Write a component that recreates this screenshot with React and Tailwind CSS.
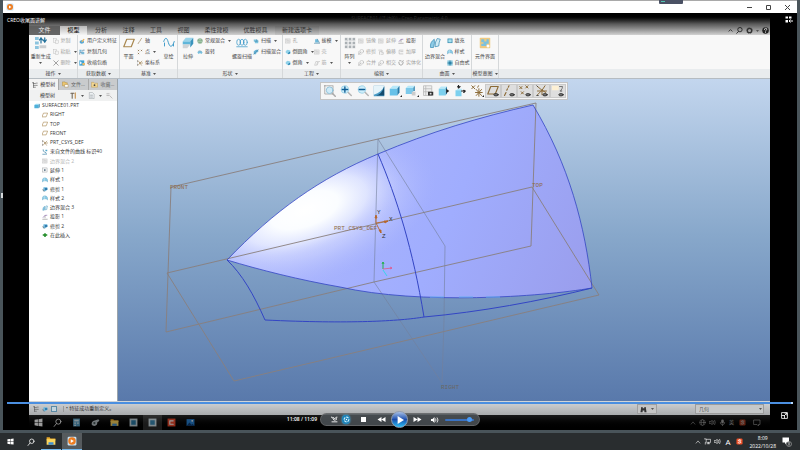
// src/App.jsx
import React, { useState } from 'react';

const line = { fill: 'none', strokeLinecap: 'round', strokeLinejoin: 'round' };

// all drawn on a 16x16 grid
const ICONS = {
  regen: (
    <g>
      <g fill="#8cc4de"><rect x="0" y="0" width="5" height="4" /><rect x="0" y="6" width="5" height="4" /><rect x="0" y="12" width="5" height="4" /></g>
      <rect x="6" y="11" width="9" height="4" fill="#c9cdd0" />
      <path d="M8 8V2M6 4l2-3 2 3M13 1v6M11 4l2 3 2-3" stroke="#23719b" strokeWidth="1.6" {...line} />
    </g>
  ),
  copy: <g fill="#f4f4f4" stroke="#b3b3b3"><rect x="1.5" y="1.5" width="8" height="10" /><rect x="6.5" y="5.5" width="8" height="9" /></g>,
  cross: <path d="M2 2l12 12M14 2L2 14" stroke="#777" strokeWidth="1.8" {...line} />,
  udf: (
    <g>
      <path d="M2 8l6-3 5 3v5l-6 2-5-2z" fill="#57a7d4" />
      <path d="M6 9l6-7 3 2-6 7z" fill="#e9b765" />
    </g>
  ),
  copygeom: (
    <g>
      <path d="M1 2h6v5H1zM6 8h8v6H6z" fill="#79b8d8" />
      <path d="M2 14V9h4M10 6V3h4" stroke="#3a6f90" strokeWidth="1.6" {...line} />
    </g>
  ),
  shrink: (
    <g>
      <rect x="1" y="1" width="13" height="14" fill="#3fa3d6" />
      <path d="M3 3l5 5-5 4z" fill="#fff" />
      <path d="M9 8h7v6H9z" fill="#e7bb69" />
    </g>
  ),
  plane: <path d="M5 3h10l-4 10H1z" stroke="#a8874f" strokeWidth="1.6" {...line} />,
  axis: <path d="M3 15l3-5M8 8l1-2M10 4l2-3" stroke="#8d7142" strokeWidth="1.6" {...line} />,
  point: <path d="M3 3l2 2M5 3L3 5M11 3l2 2M13 3l-2 2M3 11l2 2M5 11l-2 2" stroke="#7c6239" strokeWidth="1.6" {...line} />,
  csys: (
    <g stroke="#92713b" strokeWidth="1.4" {...line}>
      <path d="M3 2l5 6-5 6M8 8h7M8 8l5-5M8 8l4 6" />
      <path d="M1 2v3M1 11v3" stroke="#444" />
    </g>
  ),
  sketch: <path d="M1 6c2-6 4-6 6 1s5 8 8-1M2 12V8M14 12V9" stroke="#3e9ac8" strokeWidth="1.3" {...line} />,
  extrude: (
    <g>
      <path d="M1 6l4-5h10l-4 5z" fill="#9ad4ea" /><path d="M11 6l4-5v8l-4 5z" fill="#3a94bd" />
      <path d="M1 6h10v4H1z" fill="#5fb6da" /><path d="M1 10h10L7 15H1z" fill="#cfd3d6" />
    </g>
  ),
  blend: (
    <g>
      <circle cx="8" cy="8" r="6.5" fill="#a9ccb0" stroke="#55875e" />
      <path d="M2 6q6 4 12 0M5 13q3-5 6 0" stroke="#55875e" {...line} />
    </g>
  ),
  revolve: (
    <g>
      <path d="M1 9q7-7 14 0l-3 4q-4-3-8 0z" fill="#77bfdd" /><path d="M3 6q5-4 9 0" stroke="#39799c" {...line} />
    </g>
  ),
  helix: (
    <g stroke="#3e9ac8" {...line}>
      <ellipse cx="3.5" cy="7" rx="2.5" ry="4" /><ellipse cx="8" cy="7" rx="2.5" ry="4" /><ellipse cx="12.5" cy="7" rx="2.5" ry="4" />
      <path d="M1 13h14" />
    </g>
  ),
  sweep: (
    <g>
      <path d="M2 4h8l4 4v6H5V9H2z" fill="#7cc3de" /><path d="M10 4v4h4M5 9h5" stroke="#277299" {...line} />
    </g>
  ),
  sweepblend: (
    <g>
      <path d="M2 14V6l6-4h6v6q-6 0-6 6z" fill="#68b4d7" /><path d="M2 14l6-7 6-5" stroke="#275f82" {...line} />
    </g>
  ),
  round: (
    <g>
      <path d="M2 5l5-3 7 2v7l-6 3-6-4z" fill="#8fd0e8" /><path d="M8 14q0-7 6-7v5z" fill="#2b86b3" />
    </g>
  ),
  draft: (
    <g>
      <path d="M3 3h6l4 9H3z" fill="#6fb9da" /><path d="M1 14h14M9 3l5 9" stroke="#2b7197" strokeWidth="1.4" {...line} />
    </g>
  ),
  greybox: <g stroke="#b2b2b2" fill="#eee"><rect x="1.5" y="2.5" width="12" height="11" /><path d="M5 6h6v5H5zM5 2.5v3" /></g>,
  greyrib: <path d="M2 13L5 4h5L7 13zM9 13l3-9h3" stroke="#b2b2b2" strokeWidth="1.3" {...line} />,
  greyswap: <path d="M2 3h9v4H4v7M8 14h6V9l-4 0" stroke="#adadad" strokeWidth="1.4" {...line} />,
  greycircle: <g stroke="#adadad" strokeWidth="1.3" {...line}><circle cx="10" cy="6" r="5" /><path d="M1 14L8 8M2 7v7h6" /></g>,
  pattern: (
    <g fill="#aab0b4">
      {[1, 6, 11].map((y) => [1, 6, 11].map((x) => <rect key={`${x}-${y}`} x={x} y={y} width="4" height="4" stroke="#f8f8f8" strokeWidth="0.5" />))}
    </g>
  ),
  project: (
    <g>
      <path d="M3 9q4-8 10-6" stroke="#8058a8" strokeWidth="1.6" {...line} />
      <path d="M2 14h12M8 5v5" stroke="#777" strokeWidth="1.4" {...line} />
    </g>
  ),
  thicken: <path d="M13 3H3v10h10M7 7h6" stroke="#adadad" strokeWidth="1.5" {...line} />,
  solidify: <path d="M2 6q0 8 6 8 6-1 6-8M10 5l4-3M4 2h4" stroke="#777" strokeWidth="1.6" {...line} />,
  boundary: (
    <g>
      <path d="M2 14Q1 7 7 3q1 5-1 11z" fill="#8dcbe6" stroke="#3f8fb7" /><path d="M8 13q0-7 3-11l4 1q-2 5-2 9z" fill="#d0ebf5" stroke="#3f8fb7" />
    </g>
  ),
  fill: <rect x="2.5" y="2.5" width="11" height="10" fill="#a9e0ee" stroke="#358cb0" strokeWidth="2" />,
  style: (
    <g>
      <path d="M1 13V7q1-5 7-5 6 1 7 6v5q-3-3-7-3t-7 3z" fill="#8bcde8" stroke="#559cbd" />
      <path d="M6 3v7" stroke="#fff" {...line} />
    </g>
  ),
  freestyle: (
    <g>
      <rect x="1" y="1" width="14" height="14" fill="#86c6dd" /><circle cx="8" cy="8" r="4" fill="#2b84a9" /><path d="M1 8h3M12 8h3M8 1v3M8 12v3" stroke="#245f7a" {...line} />
    </g>
  ),
  component: (
    <g>
      <rect x="1" y="1" width="14" height="14" rx="1" fill="#eec981" />
      <path d="M3 3h4v3h3V3h3v6h-3v3H3V9h3V7H3z" fill="#7cc1dd" />
      <circle cx="12" cy="12" r="2" fill="#fff" />
    </g>
  ),
  tree: <path d="M4 2v12M4 4h5M4 9h5M11 3h3M11 9h3M1 2h3M4 14h5" stroke="#555" strokeWidth="1.6" {...line} />,
  files: (
    <g>
      <path d="M1 2h6l1 2h4v7H1z" fill="#ecc770" stroke="#a88436" /><path d="M6 8h8v6H6z" fill="#fff" stroke="#a88436" />
    </g>
  ),
  fav: <g><path d="M1 3h5l2 2h7v9H1z" fill="#f2d691" stroke="#b3914b" /><circle cx="8" cy="9.500" r="2" fill="#444" /></g>,
  tools: (
    <g strokeWidth="2.4" {...line}>
      <path d="M2 3h7M5 4v10" stroke="#6d6252" /><path d="M12 2v12" stroke="#c58a3d" />
    </g>
  ),
  sheet: <g fill="#eef1f3" stroke="#888f94"><path d="M3 1h7l4 4v10H3z" /><path d="M5 7h6M5 9h6M5 12h6" /></g>,
  part: (
    <g>
      <path d="M1 5l4-3h10l-3 3z" fill="#a6e1f6" /><path d="M12 5l3-3v9l-3 3z" fill="#216f9c" /><path d="M1 5h11v9H1z" fill="#4eb0da" />
    </g>
  ),
  trim: (
    <g>
      <path d="M4 3h10l1 6-6 5H3z" fill="#6bb5da" /><path d="M8 6h6v4H8z" fill="#1f699c" /><path d="M2 9q-1 4 4 5" stroke="#666" strokeWidth="1.5" {...line} />
    </g>
  ),
  curve: <g><path d="M2 14h7M3 2q-1 5 4 6t5 6" stroke="#3a7fa3" strokeWidth="1.8" {...line} /><path d="M9 2h5v4H9z" fill="#53a8cc" /></g>,
  extrudeRow: <g><rect x="1.500" y="2.500" width="12" height="11" fill="#f5f5f5" stroke="#83898d" /><path d="M6 5l5 3-5 3z" fill="#38556b" /></g>,
  insert: <path d="M6 3h4v3h4v4h-4v3H6v-3H2V6h4z" fill="#1d8a24" />,
  blank: <g><rect x="1" y="1" width="11" height="14" fill="#eee" /><path d="M2 4h5M2 8h5M9 9l5 5" stroke="#aaa" strokeWidth="1.6" {...line} /></g>,
  zoomfit: (
    <g {...line}>
      <rect x="1" y="1" width="11" height="11" stroke="#999" strokeDasharray="2 1" /><circle cx="7.500" cy="7" r="4.500" fill="#cfeaf7" stroke="#7fb7d1" /><path d="M11 11l4 4" stroke="#aaa" strokeWidth="2" />
    </g>
  ),
  zoomin: <g {...line}><circle cx="6.500" cy="6" r="5" fill="#cfeefa" stroke="#8ecbe4" /><path d="M3 6h7M6.500 2.500v7" stroke="#0e5c94" strokeWidth="1.800" /><path d="M11 10l4 4" stroke="#b5b5b5" strokeWidth="2" /></g>,
  zoomout: <g {...line}><circle cx="6.500" cy="6" r="5" fill="#cfeefa" stroke="#8ecbe4" /><path d="M3 6h7" stroke="#0e5c94" strokeWidth="1.800" /><path d="M11 10l4 4" stroke="#b5b5b5" strokeWidth="2" /></g>,
  repaint: <g><rect x="1" y="1" width="14" height="14" fill="#4b9cc6" /><path d="M1 1h14Q12 10 1 13z" fill="#e6f4fa" /><path d="M15 2Q12 12 4 14h11z" fill="#134a6e" /></g>,
  cube: <g><path d="M1 5l4-4h9l-3 4z" fill="#b7e8f9" /><path d="M11 5l3-4v9l-3 4z" fill="#257ba9" /><path d="M1 5h10v9H1z" fill="#67c1e8" /></g>,
  cubeview: <g><path d="M1 4l3-3h9l-2 3z" fill="#b7e8f9" /><path d="M11 4l2-3v7h-2z" fill="#257ba9" /><path d="M1 4h10v8H1z" fill="#7cc9ea" /><rect x="9" y="9" width="5" height="5" fill="#ccc" /></g>,
  cubeout: <g><path d="M1 5l3-3h8l-2 3z" fill="#b7e8f9" /><path d="M10 5l2-3v9l-2 3z" fill="#257ba9" /><path d="M1 5h9v9H1z" fill="#7cd0ee" /><path d="M11 5l4 3-4 3z" fill="#222" /></g>,
  cubearrows: <g><path d="M3 7l2-2h6l-1 2z" fill="#b7e8f9" /><path d="M2 7h8v8H2z" fill="#7cd0ee" /><path d="M6 0v4M5 2l1 2 2-2M10 8h4M13 7l2 1-2 2" stroke="#222" strokeWidth="1.500" {...line} /></g>,
  saved: <g><path d="M2 1h11v13H2z" fill="#eee" stroke="#b7b7b7" /><path d="M5 1v13M2 5h11M2 9h11" stroke="#b7b7b7" /><path d="M8 9h7v5H8z" fill="#333" /><circle cx="11.500" cy="11.500" r="1.300" fill="#ddd" /></g>,
  datum: <g stroke="#8b6a35" strokeWidth="1.300" {...line}><path d="M1 1l4 4M5 1L1 5M7 6l7 8M14 6l-7 8M10.500 5v10M6 10h9M10 1l-1 2" /></g>,
  planeEye: <g {...line}><path d="M5 2h10l-4 10H1z" stroke="#8b6a35" strokeWidth="1.500" /><ellipse cx="12" cy="13" rx="3" ry="1.600" stroke="#222" fill="#777" /></g>,
  axisEye: <g {...line}><path d="M2 14l2-4M5 7l1-2M7 3l1-2" stroke="#8b6a35" strokeWidth="1.500" /><ellipse cx="12" cy="13" rx="3" ry="1.600" stroke="#222" fill="#777" /></g>,
  pointEye: <g {...line}><path d="M1 2l3 3M4 2L1 5M9 1l3 3M12 1L9 4M3 9l3 3M6 9l-3 3" stroke="#8b6a35" strokeWidth="1.300" /><ellipse cx="12" cy="13" rx="3" ry="1.600" stroke="#222" fill="#777" /></g>,
  csysEye: <g {...line}><path d="M2 2l6 5 4-6M8 7v6M8 7l-6 6M2 8h12M8 7l5 3" stroke="#8b6a35" strokeWidth="1.300" /><path d="M1 1l1 1M1 14h2" stroke="#222" /><ellipse cx="12" cy="13" rx="3" ry="1.600" stroke="#222" fill="#777" /></g>,
  noteEye: <g {...line}><path d="M0 1h9v6H0z" fill="#fdf0d4" /><path d="M10 2h4q0 3-2 5" stroke="#555" /><path d="M11 8h2" stroke="#222" /><ellipse cx="12" cy="13" rx="3" ry="1.600" stroke="#222" fill="#777" /></g>,
  win: <path d="M1 3l6-1v6H1zM8 2l7-1v7H8zM1 9h6v5l-6-1zM8 9h7v6l-7-1z" fill="#fff" />,
  search: <g stroke="#fff" strokeWidth="1.500" {...line}><circle cx="9.500" cy="6.500" r="4.500" /><path d="M6 10l-4 5" /></g>,
  folder: <g><path d="M1 2h5l1 2h8v3H1z" fill="#e8a82b" /><path d="M1 5h14v9H1z" fill="#fbd55d" /><path d="M4 10h8v4H4z" fill="#3f8fd2" /></g>,
  player: <g><rect x="1" y="1" width="14" height="14" rx="2" fill="#c9e3f5" /><circle cx="8" cy="8" r="6" fill="#ee7c1f" /><path d="M6 5l5 3-5 3z" fill="#fff" /></g>,
  calc: <g><rect x="2" y="1" width="12" height="14" fill="#5aa2c9" /><path d="M4 3h8v3H4z" fill="#d7e9f2" /><path d="M4 8h3v2H4zM9 8h3v2H9zM4 12h3v2H4z" fill="#d7e9f2" /></g>,
  paint: <g><path d="M1 11q0-6 7-7l5-2 2 3-4 3q1 5-5 6-4 0-5-3z" fill="#b7bfc4" /><circle cx="6" cy="9" r="2" fill="#455" /></g>,
  creo: <g><rect x="1" y="1" width="14" height="14" fill="#c4d3da" /><rect x="4" y="4" width="8" height="8" fill="#2a7ba7" /></g>,
  camtasia: <g><rect x="1" y="1" width="14" height="14" fill="#f04a2c" /><path d="M11 5H5v6h6" stroke="#fff" strokeWidth="2" {...line} /></g>,
  photo: <g><rect x="1" y="2" width="14" height="12" fill="#2580d3" /><path d="M1 14l5-6 4 4 2-2 3 4z" fill="#0d3c73" /><circle cx="11" cy="5" r="1.500" fill="#fff" /></g>,
  up: <path d="M3 11l5-6 5 6" stroke="#eee" strokeWidth="1.600" {...line} />,
  net: <path d="M5 3h10v7H7M10 10v3M7 13h6M1 2h4v8H3v4" stroke="#eee" strokeWidth="1.500" {...line} />,
  globe: <g stroke="#eee" strokeWidth="1.300" {...line}><circle cx="8" cy="8" r="6.500" /><ellipse cx="8" cy="8" rx="3" ry="6.500" /><path d="M2 8h12" /></g>,
  vol: <g stroke="#eee" strokeWidth="1.500" {...line}><path d="M1 6h3l3-3v10l-3-3H1z" /><path d="M10 5q2 3 0 6M13 3q3 5 0 10" /></g>,
  mic: <g><rect x="5" y="1" width="6" height="9" rx="3" fill="#eee" /><path d="M3 8q0 5 5 5t5-5M8 13v3" stroke="#eee" strokeWidth="1.500" {...line} /></g>,
  sogou: <g><rect x="1" y="1" width="14" height="14" rx="3" fill="#ee4f26" /><path d="M11 5Q5 2 5 6q6 1 6 4-1 3-6 1" stroke="#fff" strokeWidth="2" {...line} /></g>,
  note: <path d="M2 2h12v9h-3v3l-3-3H2z" stroke="#ddd" strokeWidth="1.400" {...line} />,
  gear: <g fill="none" stroke="#333"><circle cx="8" cy="8" r="5" strokeWidth="3" /><circle cx="8" cy="8" r="7" strokeDasharray="2 2" /></g>,
  help: <g><circle cx="8" cy="8" r="7.500" fill="#222" /><path d="M5.500 6q0-3 3-3t2.500 3L8 9M8 11.500v1" stroke="#fff" strokeWidth="1.600" {...line} /></g>,
  find: <path d="M3 2h3v3h4V2h3l2 12h-5v-4H6v4H1z" fill="#333" />,
};

function Icon({ name, className = 'size-[7px]' }) {
  return <svg viewBox="0 0 16 16" className={`block shrink-0 ${className}`} aria-hidden="true">{ICONS[name]}</svg>;
}

const Caret = ({ className = '' }) => (
  <svg viewBox="0 0 6 4" className={`w-[3px] h-[2px] shrink-0 ${className}`} aria-hidden="true"><path d="M0 0h6L3 4z" fill="#555" /></svg>
);

// items: { big } or { col: [icon, text, caret, disabled] }
const groups = [
  { title: '操作', width: 'w-[49px]', items: [
    { big: 'regen', text: '重新生成', width: 'w-[24px]', caret: true },
    { col: [['copy', '复制', false, true], ['copy', '粘贴', true, true], ['cross', '删除', true, true]], width: 'w-[25px]' },
  ] },
  { title: '获取数据', width: 'w-[42px]', items: [
    { col: [['udf', '用户定义特征'], ['copygeom', '复制几何'], ['shrink', '收缩包络']], width: 'w-[39px]' },
  ] },
  { title: '基准', width: 'w-[58px]', items: [
    { big: 'plane', text: '平面', width: 'w-[17px]' },
    { col: [['axis', '轴'], ['point', '点', true], ['csys', '坐标系']], width: 'w-[23px]' },
    { big: 'sketch', text: '草绘', width: 'w-[17px]' },
  ] },
  { title: '形状', width: 'w-[105px]', items: [
    { big: 'extrude', text: '拉伸', width: 'w-[18px]' },
    { col: [['blend', '常规混合', true], ['revolve', '旋转']], width: 'w-[34px]' },
    { big: 'helix', text: '螺旋扫描', width: 'w-[22px]' },
    { col: [['sweep', '扫描', true], ['sweepblend', '扫描混合']], width: 'w-[28px]' },
  ] },
  { title: '工程', width: 'w-[58px]', items: [
    { col: [['greybox', '孔', false, true], ['round', '倒圆角', true], ['round', '倒角', true]], width: 'w-[29px]' },
    { col: [['draft', '拔模', true], ['greybox', '壳', false, true], ['greyrib', '筋', true, true]], width: 'w-[25px]' },
  ] },
  { title: '编辑', width: 'w-[82px]', items: [
    { big: 'pattern', text: '阵列', width: 'w-[17px]', caret: true },
    { col: [['greybox', '镜像', false, true], ['greycircle', '修剪', false, true], ['greycircle', '合并', false, true]], width: 'w-[20px]' },
    { col: [['greybox', '延伸', false, true], ['greyswap', '偏移', false, true], ['greycircle', '相交', false, true]], width: 'w-[20px]' },
    { col: [['project', '投影'], ['thicken', '加厚', false, true], ['solidify', '实体化', false, true]], width: 'w-[24px]' },
  ] },
  { title: '曲面', width: 'w-[49px]', items: [
    { big: 'boundary', text: '边界混合', width: 'w-[23px]' },
    { col: [['fill', '填充'], ['style', '样式'], ['freestyle', '自由式']], width: 'w-[24px]' },
  ] },
  { title: '模型意图', width: 'w-[27px]', items: [{ big: 'component', text: '元件界面', width: 'w-[26px]' }] },
];

const tabs = [
  ['文件', 'w-[31px] bg-[#5c5c5c]/90 text-[#e8e8e8]'],
  ['模型', 'w-[27px] bg-linear-to-b from-[#b9b9b9] to-[#f5f5f5] text-black'],
  ['分析', 'w-[28px]'],
  ['注释', 'w-[27px]'],
  ['工具', 'w-[28px]'],
  ['视图', 'w-[27px]'],
  ['柔性建模', 'w-[39px]'],
  ['优胜模具', 'w-[39px]'],
  ['新建选项卡', 'w-[44px] bg-black/5'],
];

const treeRows = [
  ['plane', 'RIGHT'],
  ['plane', 'TOP'],
  ['plane', 'FRONT'],
  ['csys', 'PRT_CSYS_DEF'],
  ['curve', '来自文件的曲线 标识40'],
  ['greybox', '边界混合 2', true],
  ['extrudeRow', '延伸 1'],
  ['style', '样式 1'],
  ['trim', '修剪 1'],
  ['style', '样式 2'],
  ['boundary', '边界混合 3'],
  ['project', '投影 1'],
  ['trim', '修剪 2'],
  ['insert', '在此插入'],
];

const viewTools = [
  ['zoomfit', '重新调整'], ['zoomin', '放大'], ['zoomout', '缩小'], ['repaint', '重画'], ['cube', '显示样式', false, true],
  ['cubeview', '已保存方向', false, true], ['saved', '视图管理器'], ['cubeout', '透视图'], ['cubearrows', '分解'], ['datum', '基准显示', false, true],
  ['planeEye', '平面显示', true], ['axisEye', '轴显示', true], ['pointEye', '点显示', true], ['csysEye', '坐标系显示', true], ['noteEye', '注释显示', true],
];

function RibbonItem({ item }) {
  if (item.big) {
    return (
      <button className={`${item.width} h-[33px] flex flex-col items-center pt-[2px] whitespace-nowrap`}>
        <Icon name={item.big} className="size-[12px]" />
        <span className="mt-[4px] leading-[7px]">{item.text}</span>
        {item.caret && <Caret className="mt-[2px]" />}
      </button>
    );
  }
  return (
    <div className={`${item.width} flex flex-col`}>
      {item.col.map(([icon, text, caret, disabled]) => (
        <button key={text} disabled={disabled} className={`h-[11px] flex items-center gap-[2px] whitespace-nowrap ${disabled ? 'text-[#a3a3a3]' : ''}`}>
          <Icon name={icon} className="size-[6px]" />
          {text}
          {caret && <Caret className="ml-[1px]" />}
        </button>
      ))}
    </div>
  );
}

function Ribbon() {
  return (
    <div className="h-[44px] flex bg-[#f8f8f8] border-b border-[#b5bcc2] text-[5px] text-[#444]">
      {groups.map((g) => (
        <section key={g.title} className={`${g.width} shrink-0 flex flex-col border-r border-[#d5d8da]`}>
          <div className="h-[34px] flex justify-center overflow-hidden">
            {g.items.map((item, i) => <RibbonItem key={i} item={item} />)}
          </div>
          <button className="flex-1 flex items-center justify-center gap-[2px] bg-[#e9ecee] whitespace-nowrap">
            {g.title}<Caret />
          </button>
        </section>
      ))}
      <div className="flex-1 pt-[34px]"><div className="h-full bg-[#e9ecee]" /></div>
    </div>
  );
}

function AppHeader() {
  return (
    <header className="bg-linear-to-b from-black from-10% via-[#5a5a5a] via-50% to-[#d2d2d2] text-[#333]">
      <h1 className="h-[13px] pt-[2px] text-center text-[5px] leading-[7px] text-[#2c2c2c]">SURFACE01 (活动的) - Creo Parametric 4.0</h1>
      <nav className="h-[9px] flex text-[6px] leading-[9px]">
        {tabs.map(([name, cls]) => (
          <button key={name} className={`${cls} text-center whitespace-nowrap`}>{name}</button>
        ))}
        <div className="ml-auto flex items-center gap-[3px] pr-[1px]">
          <button aria-label="折叠"><svg viewBox="0 0 16 16" className="size-[5px]"><path d="M2 11l6-6 6 6" stroke="#222" strokeWidth="2.5" fill="none" /></svg></button>
          <button aria-label="搜索"><svg viewBox="0 0 16 16" className="size-[7px]"><circle cx="9" cy="6" r="5" stroke="#222" strokeWidth="2" fill="none" /><path d="M6 10l-5 5" stroke="#222" strokeWidth="2" /></svg></button>
          <button aria-label="设置"><Icon name="gear" /></button>
          <Caret />
          <button aria-label="帮助"><Icon name="help" /></button>
        </div>
      </nav>
    </header>
  );
}

function ModelTree() {
  return (
    <aside className="w-[89px] shrink-0 flex flex-col bg-white border-r border-[#9aa3aa] text-[5px] text-[#333]">
      <div className="h-[11px] grid grid-cols-3 bg-[#c9cbcd]">
        <button className="flex items-center justify-center gap-[2px] bg-[#f3f3f3]"><Icon name="tree" className="size-[6px]" />模型树</button>
        <button className="flex items-center justify-center gap-[2px] border-l border-[#a9a9a9] text-[#666]"><Icon name="files" />文件…</button>
        <button className="flex items-center justify-center gap-[2px] border-l border-[#a9a9a9] text-[#666]"><Icon name="fav" />收藏…</button>
      </div>
      <div className="h-[11px] flex items-center bg-[#f0f1f1] pl-[11px] pr-[4px]">
        <h2>模型树</h2>
        <div className="ml-auto flex items-center gap-[4px]">
          <button aria-label="设置"><Icon name="tools" /></button>
          <Caret />
          <button aria-label="显示"><Icon name="sheet" /></button>
          <Caret />
          <button aria-label="过滤"><Icon name="blank" /></button>
        </div>
      </div>
      <ul className="h-[139px] flex flex-col justify-between whitespace-nowrap leading-[9px]">
        <li className="flex items-center gap-[2px] pl-[5px]"><Icon name="part" className="size-[6px]" />SURFACE01.PRT</li>
        {treeRows.map(([icon, text, dim]) => (
          <li key={text} className={`flex items-center gap-[2px] pl-[13px] ${dim ? 'text-[#b5b5b5]' : ''}`}>
            <Icon name={icon} className="size-[6px]" />{text}
          </li>
        ))}
      </ul>
    </aside>
  );
}

const SURFACE = 'M227 260C274 211 320 178 378 154C430 132 480 117 533 105C569 165 585 225 592 288C540 297 420 305 340 287C300 280 260 270 227 260Z';

function Model() {
  return (
    <svg viewBox="118 79 652 322" preserveAspectRatio="xMidYMid slice" className="absolute inset-0 size-full" fill="none">
      <defs>
        <linearGradient id="base" x1="300" y1="180" x2="580" y2="300" gradientUnits="userSpaceOnUse">
          <stop offset="0" stopColor="#abb6fd" />
          <stop offset="0.5" stopColor="#a0adfe" />
          <stop offset="1" stopColor="#9a9eed" />
        </linearGradient>
        <radialGradient id="shine">
          <stop offset="0" stopColor="#fff" />
          <stop offset="0.35" stopColor="#fdffff" stopOpacity="0.95" />
          <stop offset="0.65" stopColor="#f0f4ff" stopOpacity="0.6" />
          <stop offset="1" stopColor="#c0c8ff" stopOpacity="0" />
        </radialGradient>
        <radialGradient id="glow">
          <stop offset="0" stopColor="#eef1ff" stopOpacity="0.8" />
          <stop offset="0.6" stopColor="#dde2ff" stopOpacity="0.45" />
          <stop offset="1" stopColor="#b5bfff" stopOpacity="0" />
        </radialGradient>
        <clipPath id="surface"><path d={SURFACE} /></clipPath>
      </defs>
      <path d={SURFACE} fill="url(#base)" />
      <g clipPath="url(#surface)">
        <ellipse cx="305" cy="212" rx="135" ry="72" fill="url(#glow)" transform="rotate(-18 305 212)" />
        <ellipse cx="305" cy="210" rx="100" ry="46" fill="url(#shine)" transform="rotate(-20 305 210)" />
      </g>
      <g stroke="#897f7d" strokeWidth="0.9">
        <path d="M171 187L378 139L536 103L531 246L374 282L166 332Z" />
        <path d="M167 273L532 187L599 295L234 381Z" />
        <path d="M378 139L445 246L444 320L442 383L374 282Z" stroke="#74809a" strokeWidth="0.6" />
      </g>
      <g stroke="#3345c4">
        <path d={SURFACE} strokeWidth="0.8" />
        <path d="M378 154C397 198 413 250 424 317" />
        <path d="M227 260C242 274 254 295 265 320C350 324 400 321 424 317C480 312 540 301 592 288" />
      </g>
      <path d="M430 297h14M459 297h14M486 297h14" stroke="#66aaf0" />
      <g stroke="#b7672b" strokeWidth="0.9">
        <path d="M376 223V216M376 223L388 221M376 223L381 233" />
        <path d="M375 218l1-3 1 3zM384 221l4 0-3 2zM379 230l2 3 0-3z" fill="#b7672b" />
      </g>
      <path d="M383 269V262M382 264l1-2 1 2" stroke="#25b050" />
      <path d="M383 269l9-1M390 267l2 1-2 1" stroke="#e0578a" strokeWidth="0.8" />
      <path d="M383 270l4 6" stroke="#38d5ea" />
      <g className="font-['Liberation_Mono',monospace] text-[6px]" fill="#8f6a48">
        <text x="170" y="189">FRONT</text>
        <text x="532" y="187">TOP</text>
        <text x="441" y="389" fill="#696763">RIGHT</text>
        <text x="334" y="230">PRT_CSYS_DEF</text>
        <g fill="#333">
          <text x="377" y="214">Y</text>
          <text x="389" y="221">X</text>
          <text x="382" y="238">Z</text>
        </g>
      </g>
    </svg>
  );
}

function Viewport() {
  return (
    <main className="relative flex-1 overflow-hidden bg-linear-to-b from-[#c3d6ee] via-[#88a8cb] via-48% to-[#5979ab]">
      <Model />
      <div className="relative mx-auto mt-[3px] w-[248px] h-[18px] p-[1px] flex bg-[#f6f6f6] border border-[#c4c4c4]">
        {viewTools.map(([icon, label, on, more]) => (
          <button key={icon} aria-label={label} className={`relative flex-1 flex items-center justify-center border ${on ? 'bg-[#dedede] border-[#cacaca]' : 'border-transparent'}`}>
            <Icon name={icon} className="size-[12px]" />
            {more && <svg viewBox="0 0 4 4" className="absolute right-0 bottom-0 size-[2px]"><path d="M4 0v4H0z" fill="#222" /></svg>}
          </button>
        ))}
      </div>
    </main>
  );
}

function StatusBar() {
  return (
    <footer className="h-[14px] shrink-0 pt-[2px] flex items-center bg-linear-to-b from-[#d4d6d8] to-[#a9abad] text-[5px] text-[#333]">
      <div className="w-[35px] flex items-center gap-[3px] pl-[4px] border-r border-[#999]">
        <button aria-label="树"><Icon name="tree" className="size-[6px]" /></button>
        <button aria-label="浏览器"><Icon name="trim" className="size-[6px]" /></button>
        <button aria-label="全屏" className="size-[6px] border border-[#5b8aa5] bg-[#c4d5de]" />
      </div>
      <p className="pl-[2px]">• 特征成功重新定义。</p>
      <button aria-label="查找" className="ml-auto flex items-center gap-[4px] px-[2px] h-[10px] border border-[#a0a0a0] bg-[#c5c5c5]"><Icon name="find" /><Caret /></button>
      <div className="relative mr-[6px] ml-[38px]">
        <select aria-label="选择过滤器" defaultValue="几何" className="block w-[69px] h-[10px] pl-[3px] py-0 appearance-none border border-[#9c9c9c] bg-[#c6c8c9] text-[5px] leading-[8px] text-[#555]">
          <option>几何</option>
        </select>
        <Caret className="absolute right-[2px] top-[4px]" />
      </div>
    </footer>
  );
}

function RecordedTaskbar() {
  const apps = ['win', 'search', 'calc', 'paint', 'folder', 'creo', 'creo', 'camtasia', 'photo'];
  return (
    <div className="h-[15px] shrink-0 flex items-stretch bg-linear-to-b from-[#191919] to-black text-[5px] text-white">
      {apps.map((name, i) => (
        <button key={i} aria-label={name} className={`w-[19px] flex items-center justify-center ${i === 6 ? 'bg-white/10' : ''}`}>
          <Icon name={name} className="size-[9px] opacity-60" />
        </button>
      ))}
      <div className="ml-auto mr-[9px] flex items-center gap-[3px] opacity-40">
        <Icon name="up" className="size-[6px]" />
        <Icon name="globe" />
        <Icon name="vol" />
        <Icon name="mic" />
        <span>英</span>
        <Icon name="sogou" className="size-[7px] mx-[2px]" />
        <Icon name="note" className="size-[8px] ml-[2px]" />
      </div>
    </div>
  );
}

function PlayerControls() {
  const [volume, setVolume] = useState(92);
  return (
    <div className="absolute bottom-[4px] left-1/2 -translate-x-1/2 w-[160px] h-[13px] pl-[10px] pr-[5px] flex items-center rounded-full bg-[#4e5358]/85 border border-[#777]/60">
      <time className="absolute right-full mr-[4px] whitespace-nowrap text-[5px] font-semibold text-white">11:08 / 11:09</time>
      <button aria-label="随机播放"><svg viewBox="0 0 12 12" className="size-[7px]"><path d="M0 2h2l3 5h3M1 10h10M4 2l2 3 3-3h2M9 7V3" stroke="#fff" strokeWidth="1.500" fill="none" /></svg></button>
      <button aria-label="重复" className="ml-[4px] size-[9px] flex items-center justify-center rounded-full bg-[#1c81b6] shadow-[0_0_2px_#4bc3ff]">
        <svg viewBox="0 0 12 12" className="size-[7px]"><circle cx="6" cy="6" r="4" stroke="#c9efff" strokeWidth="2" strokeDasharray="4 1.500" fill="none" /><circle cx="6" cy="6" r="1.200" fill="#fff" /></svg>
      </button>
      <button aria-label="停止" className="ml-[11px] size-[5px] bg-white" />
      <button aria-label="后退" className="ml-[11px]"><svg viewBox="0 0 16 10" className="w-[9px] h-[5px]"><path d="M8 0v10L0 5zM16 0v10L8 5z" fill="#fff" /></svg></button>
      <button aria-label="播放" className="ml-[5px] size-[17px] shrink-0 flex items-center justify-center rounded-full border border-[#8e9bb2] bg-linear-to-b from-[#a8bfe6] via-[#1c4eae] via-50% to-[#2fc0f5]">
        <svg viewBox="0 0 10 10" className="size-[8px]"><path d="M2 0l8 5-8 5z" fill="#fff" /></svg>
      </button>
      <button aria-label="前进" className="ml-[5px]"><svg viewBox="0 0 16 10" className="w-[9px] h-[5px]"><path d="M0 0v10l8-5zM8 0v10l8-5z" fill="#fff" /></svg></button>
      <button aria-label="静音" className="ml-[9px]"><svg viewBox="0 0 16 12" className="w-[8px] h-[6px]"><path d="M0 4h3l4-4v12L3 8H0z" fill="#fff" /><path d="M9 3q2 3 0 6M12 1q4 5 0 10" stroke="#fff" strokeWidth="1.600" fill="none" /></svg></button>
      <input
        type="range" aria-label="音量" value={volume} onChange={(e) => setVolume(e.target.value)}
        className="ml-[6px] w-[29px] h-[2px] appearance-none rounded-full bg-[#3a72c2] [&::-webkit-slider-thumb]:appearance-none [&::-webkit-slider-thumb]:size-[5px] [&::-webkit-slider-thumb]:rounded-full [&::-webkit-slider-thumb]:bg-[#4a9bf5]"
      />
    </div>
  );
}

function Video() {
  return (
    <div className="relative flex-1 min-h-0 flex flex-col bg-black">
      <div className="flex-1 min-h-0 ml-[26px] mr-[27px] flex flex-col">
        <AppHeader />
        <Ribbon />
        <div className="flex-1 min-h-0 flex">
          <ModelTree />
          <Viewport />
        </div>
        <StatusBar />
        <RecordedTaskbar />
      </div>
      <p className="absolute left-[4px] top-[4px] text-[5px] leading-[7px] text-white">CREO收尾面讲解</p>
      <button aria-label="切换到媒体库" className="absolute right-[4px] top-[3px]">
        <svg viewBox="0 0 16 14" className="w-[8px] h-[7px]"><path d="M1 1h5v4H1zM8 1h5v4H8zM1 8h5v5H1z" fill="#fff" /><path d="M16 10H9M11 7l-3 3 3 3" stroke="#fff" strokeWidth="2" fill="none" /></svg>
      </button>
      <input
        type="range" aria-label="进度" defaultValue="100"
        className="absolute inset-x-[4px] bottom-[26px] h-[2px] appearance-none bg-[#4b8fe0] [&::-webkit-slider-thumb]:appearance-none [&::-webkit-slider-thumb]:w-[2px] [&::-webkit-slider-thumb]:h-[2px] [&::-webkit-slider-thumb]:bg-[#b8dcff]"
      />
      <PlayerControls />
      <button aria-label="全屏播放" className="absolute right-[9px] bottom-[11px]">
        <svg viewBox="0 0 12 12" className="size-[7px]"><path d="M1 1h10v10H1zM5 7l5-5M6 2h4v4M1 6h5v5" stroke="#fff" strokeWidth="1.400" fill="none" /></svg>
      </button>
    </div>
  );
}

function Taskbar() {
  return (
    <div className="h-[17px] shrink-0 flex items-stretch bg-[#292d2f] text-[5px] text-white">
      <button aria-label="开始" className="w-[21px] flex items-center justify-center"><Icon name="win" /></button>
      <button aria-label="搜索" className="w-[20px] flex items-center justify-center"><Icon name="search" className="size-[8px]" /></button>
      <button aria-label="文件资源管理器" className="w-[20px] flex items-center justify-center border-b border-[#76b9ed]"><Icon name="folder" className="size-[10px]" /></button>
      <button aria-label="媒体播放器" className="w-[20px] ml-[1px] flex items-center justify-center bg-[#565b5e] border-b border-[#76b9ed]"><Icon name="player" className="size-[10px]" /></button>
      <div className="ml-auto flex items-center gap-[3px] pr-[8px]">
        <Icon name="up" className="size-[6px]" />
        <Icon name="net" />
        <Icon name="vol" />
        <span className="text-[8px] px-[1px]">A</span>
        <Icon name="sogou" className="size-[7px] mx-[2px]" />
        <time className="ml-[1px] mr-[3px] text-center leading-[8px]">8:09<br />2022/10/28</time>
        <button aria-label="通知">
          <svg viewBox="0 0 20 20" className="size-[10px]"><path d="M1 1h13v10H9l-3 4v-4H1z" fill="#fff" /><circle cx="14" cy="14" r="5" fill="#292d2f" stroke="#ccc" /><path d="M13 12l1-1v6" stroke="#fff" strokeWidth="1.500" fill="none" /></svg>
        </button>
      </div>
    </div>
  );
}

export default function App() {
  return (
    <div className="h-screen flex flex-col overflow-hidden bg-[#49545a] font-['Open_Sans','Noto_Sans_CJK_SC',sans-serif]">
      <div className="relative flex-1 min-h-0 flex flex-col px-[3px] pb-[3px]">
        <div className="h-[13px] shrink-0 flex items-center bg-white border-t border-[#a9a9a9] pl-[3px]">
          <Icon name="player" className="size-[8px]" />
          <div className="ml-auto flex items-center text-[#444]">
            <button aria-label="最小化" className="w-[19px] flex justify-center"><svg viewBox="0 0 10 10" className="size-[5px]"><path d="M0 5h10" stroke="currentColor" strokeWidth="2" /></svg></button>
            <button aria-label="最大化" className="w-[19px] flex justify-center"><svg viewBox="0 0 10 10" className="size-[5px]"><path d="M1 1h8v8H1z" fill="none" stroke="currentColor" strokeWidth="2" /></svg></button>
            <button aria-label="关闭" className="w-[19px] flex justify-center"><svg viewBox="0 0 10 10" className="size-[5px]"><path d="M0 0l10 10M10 0L0 10" stroke="currentColor" strokeWidth="2" /></svg></button>
          </div>
        </div>
        <Video />
        <div className="absolute top-0 right-[117px] w-[24px] h-[4px] pl-[2px] pt-[1px] rounded-b-[1px] bg-[#4a5164]"><div className="w-[4px] h-[1px] bg-[#4fc3b0]" /></div>
        <div className="absolute left-[1px] top-[193px] w-[2px] h-[5px] bg-[#d5d9db]" />
      </div>
      <Taskbar />
    </div>
  );
}
